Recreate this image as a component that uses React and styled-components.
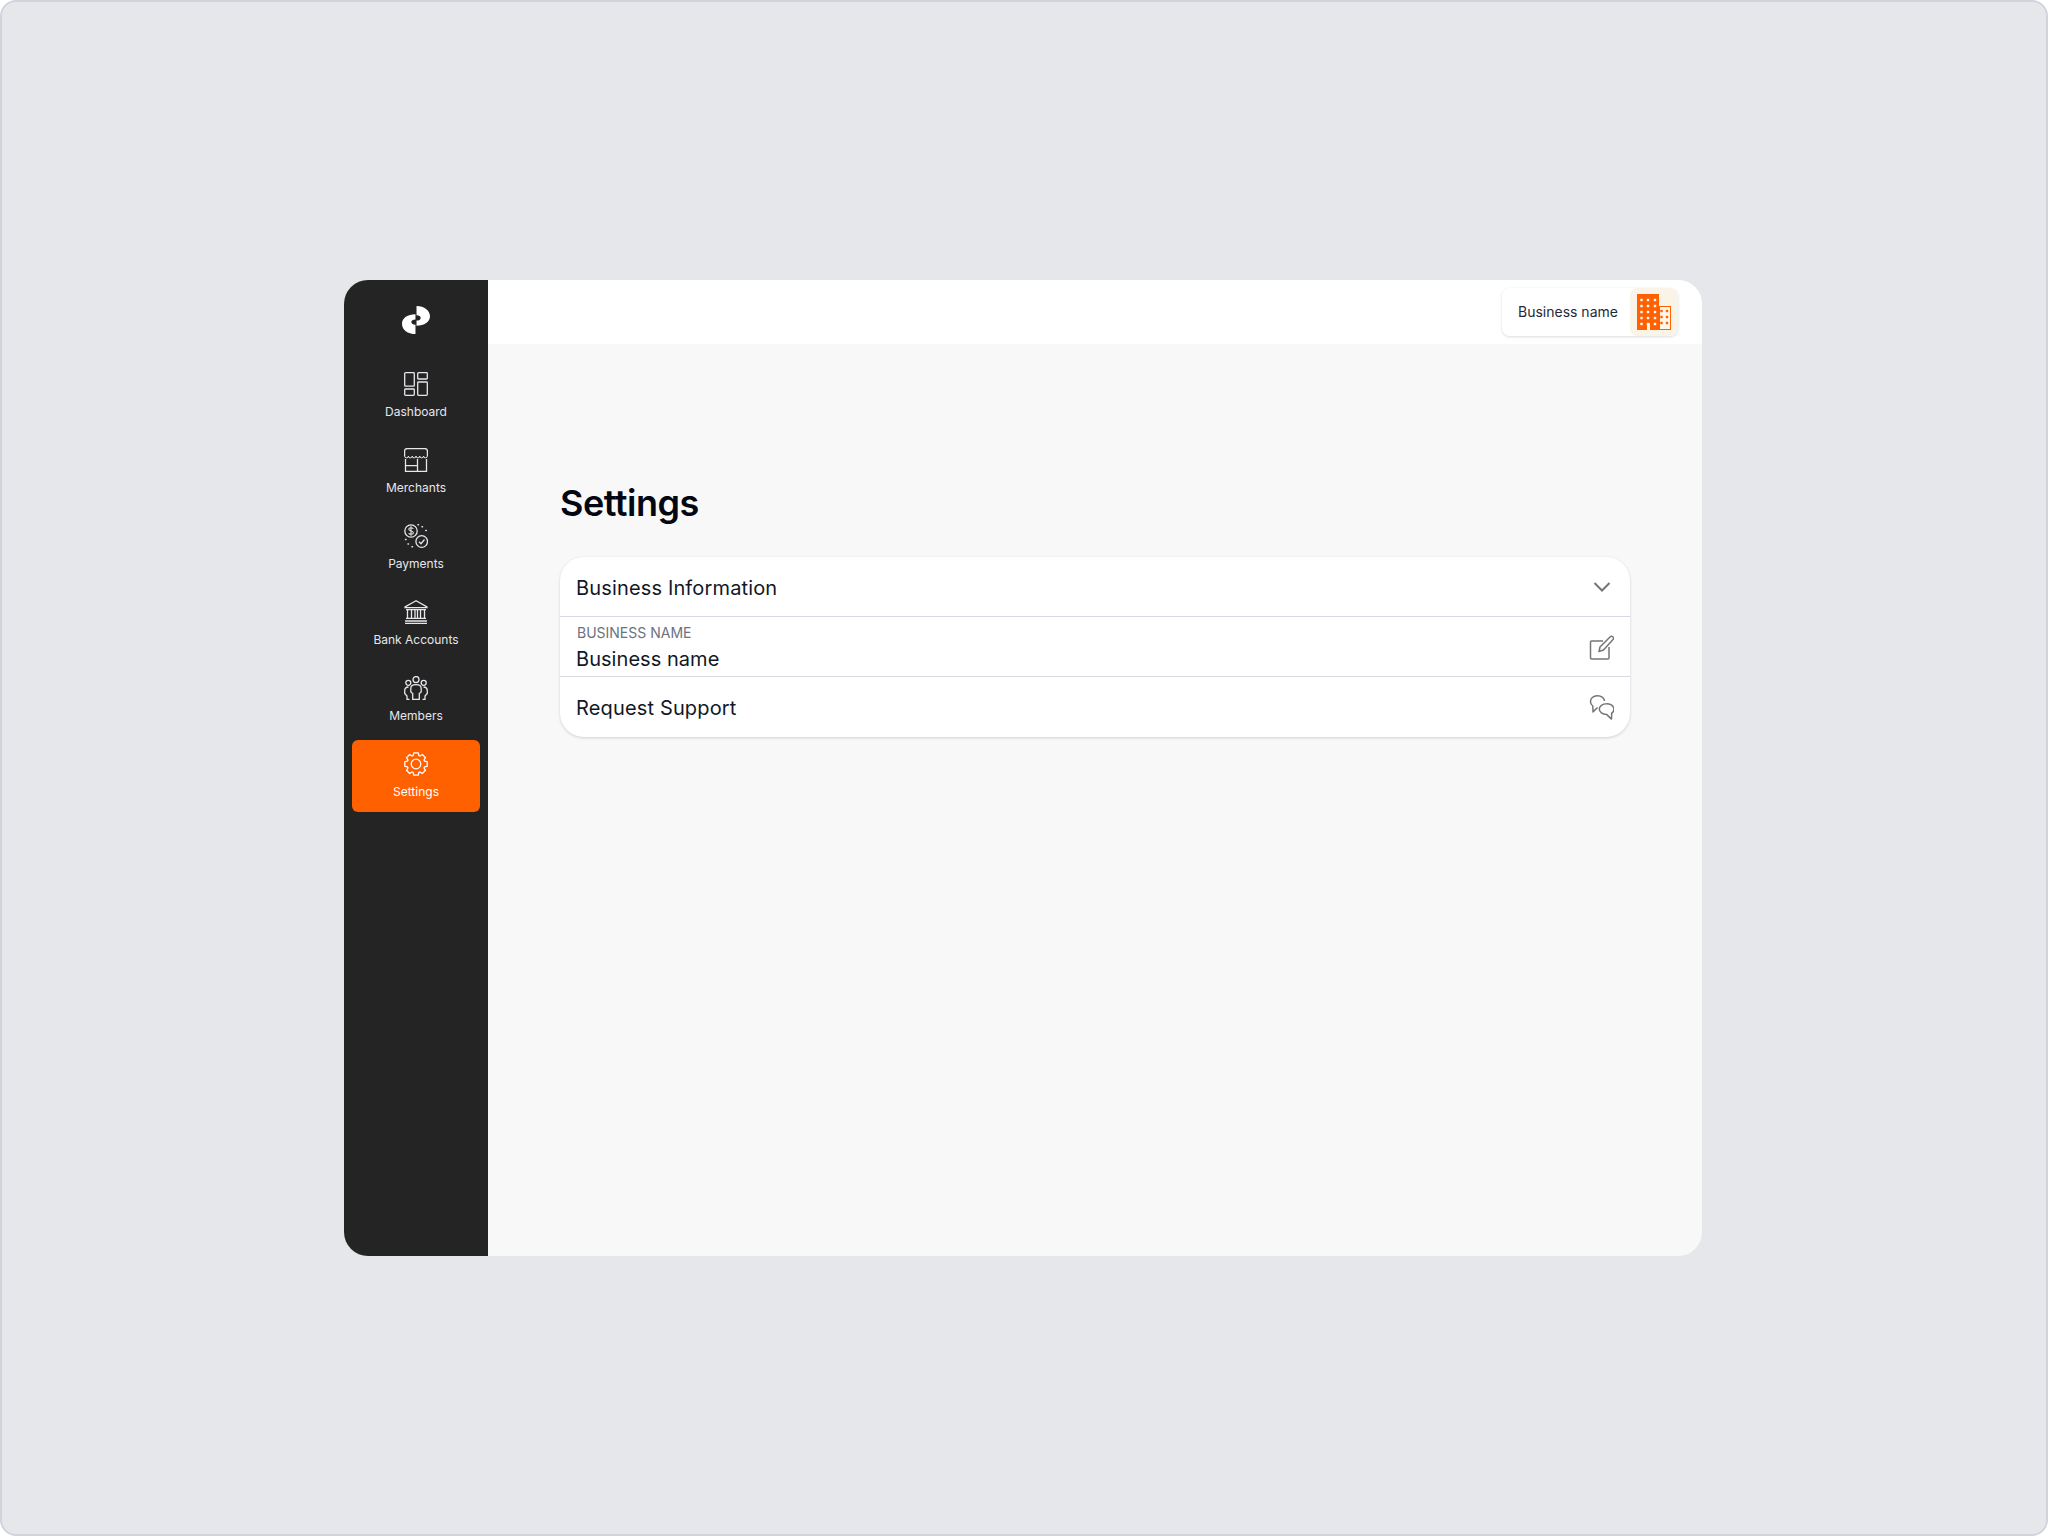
import React from 'react'
import styled, { createGlobalStyle } from 'styled-components'

const GlobalStyle = createGlobalStyle`
  html, body { margin: 0; padding: 0; }
  body { font-family: Inter, "Liberation Sans", sans-serif; }
  * { box-sizing: border-box; }
`

const Page = styled.div`
  width: 2048px;
  height: 1536px;
  display: flex;
  align-items: center;
  justify-content: center;
  padding-right: 2px;
  background: #e5e7eb;
  border: 2px solid #d1d5db;
  border-radius: 16px;
`

const Window = styled.div`
  width: 1358px;
  height: 976px;
  display: flex;
  border-radius: 24px;
  overflow: hidden;
  background: #f8f8f8;
`

const Sidebar = styled.nav`
  width: 144px;
  flex-shrink: 0;
  display: flex;
  flex-direction: column;
  align-items: center;
  background: #242424;
  padding-top: 26px;
`

const LogoMark = styled.svg`
  width: 28px;
  height: 28px;
  margin-bottom: 26px;
  display: block;
`

const NavList = styled.div`
  display: flex;
  flex-direction: column;
  gap: 4px;
`

const NavItem = styled.a`
  width: 128px;
  height: 72px;
  display: flex;
  flex-direction: column;
  align-items: center;
  padding-top: 12px;
  gap: 8px;
  border-radius: 6px;
  font-size: 12px;
  line-height: 16px;
  color: ${p => (p.$active ? '#ffffff' : '#e5e7eb')};
  background: ${p => (p.$active ? '#ff6000' : 'transparent')};
  svg { display: block; }
`

const Main = styled.div`
  flex: 1;
  display: flex;
  flex-direction: column;
`

const TopBar = styled.header`
  height: 64px;
  flex-shrink: 0;
  display: flex;
  align-items: center;
  justify-content: flex-end;
  padding: 0 24px;
  background: #ffffff;
`

const AccountPill = styled.div`
  width: 176px;
  height: 48px;
  display: flex;
  align-items: center;
  justify-content: space-between;
  padding-left: 16px;
  border-radius: 8px;
  background: #ffffff;
  box-shadow: 0 1px 3px rgba(0, 0, 0, 0.14);
  font-size: 14px;
  line-height: 16px;
  color: #1f2937;
  overflow: hidden;
`

const AccountIcon = styled.div`
  width: 48px;
  height: 48px;
  display: flex;
  align-items: center;
  justify-content: center;
  border-radius: 8px;
  background: #f9f3e8;
`

const Content = styled.main`
  flex: 1;
  padding: 137px 72px 0;
`

const Title = styled.h1`
  margin: 0 0 32px;
  font-size: 36px;
  line-height: 44px;
  font-weight: 600;
  letter-spacing: -0.5px;
  color: #030712;
`

const Card = styled.section`
  border-radius: 24px;
  background: #ffffff;
  box-shadow: 0 1px 3px rgba(0, 0, 0, 0.16);
  overflow: hidden;
`

const Row = styled.div`
  height: 60px;
  display: flex;
  align-items: center;
  justify-content: space-between;
  padding: 2px 16px 0;
  border-bottom: ${p => (p.$last ? 'none' : '1px solid #d9d8e2')};
  color: #111827;
  font-size: 20px;
  letter-spacing: 0.15px;
  svg { display: block; flex-shrink: 0; color: #757575; }
`

const FieldLabel = styled.div`
  padding-left: 1px;
  font-size: 14px;
  line-height: 18px;
  letter-spacing: 0;
  color: #6b7280;
`

const FieldValue = styled.div`
  margin-top: 4px;
  font-size: 20px;
  line-height: 26px;
  letter-spacing: 0.05px;
`

function BuildingIcon() {
  return (
    <svg width="34" height="36" viewBox="0 0 34 36">
      <path d="M0 0h22v36H13v-7h-3v7H0z" fill="#ff6000" />
      <rect x="22.5" y="12.5" width="11" height="23" fill="#fff6ea" stroke="#ff6000" />
      {[6, 12, 18, 24, 30].map(y => [4.5, 11, 18].map(x => (
        <rect key={`m${y}${x}`} x={x - 1.2} y={y - 1.2} width="2.4" height="2.4" fill="#fff" />
      )))}
      {[17, 23, 29].map(y => [24.5, 30].map(x => (
        <rect key={`s${y}${x}`} x={x - 1.2} y={y - 1.2} width="2.4" height="2.4" fill="#ff6000" />
      )))}
    </svg>
  )
}

const iconProps = {
  width: 24,
  height: 24,
  viewBox: '0 0 24 24',
  fill: 'none',
  stroke: 'currentColor',
  strokeWidth: 1.3,
}

const DashboardIcon = () => (
  <svg {...iconProps}>
    <rect x=".7" y=".7" width="9.6" height="13.5" rx=".8" />
    <rect x="13.7" y=".7" width="9.6" height="6.3" rx=".8" />
    <rect x=".7" y="17" width="9.6" height="6.3" rx=".8" />
    <rect x="13.7" y="10" width="9.6" height="13.3" rx=".8" />
  </svg>
)

const MerchantsIcon = () => (
  <svg {...iconProps}>
    <path d="M.6 8V3.100A2.500 2.500 0 0 1 3.100.6h17.800a2.500 2.500 0 0 1 2.500 2.500V8" />
    <path d="M23.400 8a1.900 1.900 0 0 1-3.800 0 1.900 1.900 0 0 1-3.800 0 1.900 1.900 0 0 1-3.800 0 1.900 1.900 0 0 1-3.800 0 1.900 1.900 0 0 1-3.800 0 1.900 1.900 0 0 1-3.800 0" strokeWidth="1" />
    <path d="M1.500 11v12.400h21V11M1.500 17.700h12M13.500 11v12.400" />
  </svg>
)

const PaymentsIcon = () => (
  <svg {...iconProps}>
    <circle cx="7" cy="7" r="6.200" />
    <path d="M9.400 4.900C8.800 3.300 4.800 3.200 4.800 5.300c0 2.300 4.600 1.100 4.600 3.500 0 2-4.200 1.800-4.800.3M7 2.200v9.600" strokeWidth="1.100" />
    <circle cx="17.700" cy="17.500" r="5.800" />
    <path d="M15 17.700l2 2 3.500-4.200" />
    <path d="M14 .8h.5M18 2.800h.5M21.800 6.500h.5M1.500 15.500h.5M4 20h.5M8 22.800h.5" strokeWidth="1.500" strokeLinecap="round" />
  </svg>
)

const BankIcon = () => (
  <svg {...iconProps}>
    <path d="M12 .8L1 7v.7h22V7z" />
    <path d="M2 9.700h20M3.500 10v8M7.500 10v8M11 10v8M13.500 10v8M16.500 10v8M20.500 10v8M2 18.300h20M1 21h22M1 23.300h22" />
  </svg>
)

const MembersIcon = () => (
  <svg {...iconProps}>
    <circle cx="12" cy="3.600" r="3" />
    <circle cx="4.300" cy="6.800" r="2.500" />
    <circle cx="19.700" cy="6.800" r="2.500" />
    <path d="M8.700 23.300V17.500L6.800 16V12.500C6.800 10 9 8.700 12 8.700s5.200 1.300 5.200 3.800V16l-1.900 1.500v5.800z" />
    <path d="M4.500 11C2 11 .7 12.500.7 15v2.500L3 20v3.300h2.500M19.500 11c2.500 0 3.800 1.500 3.800 4v2.500L21 20v3.300h-2.500" />
  </svg>
)

// 8 tooth gear outline, worked out once from polar points
const gearPoints = Array.from({ length: 8 }).flatMap((_, i) => {
  const a = (i * Math.PI) / 4 - Math.PI / 2
  const spots = [[-0.33, 8.9], [-0.2, 11.4], [0.2, 11.4], [0.33, 8.9]]
  return spots.map(([d, r]) => `${(12 + r * Math.cos(a + d)).toFixed(2)},${(12 + r * Math.sin(a + d)).toFixed(2)}`)
}).join(' ')

const GearIcon = () => (
  <svg {...iconProps}>
    <polygon points={gearPoints} strokeLinejoin="round" />
    <circle cx="12" cy="12" r="4.800" />
  </svg>
)

const ChevronIcon = () => (
  <svg width="24" height="24" viewBox="0 1 24 24" fill="none" stroke="currentColor" strokeWidth="2">
    <path d="M4.500 8l7.500 7.500L19.500 8" />
  </svg>
)

const EditIcon = () => (
  <svg width="26" height="26" viewBox="0 0 26 26" fill="none" stroke="currentColor" strokeWidth="1.500">
    <path d="M15 6H3.500a1 1 0 0 0-1 1v16a1 1 0 0 0 1 1h16.500a1 1 0 0 0 1-1V12" />
    <path d="M11 16.500l1-4.500L22 2a1.900 1.900 0 0 1 3 2.500L15.500 15z" strokeLinejoin="round" />
  </svg>
)

const ChatIcon = () => (
  <svg width="26" height="26" viewBox="0 1 26 26" fill="none" stroke="currentColor" strokeWidth="1.500" strokeLinejoin="round">
    <path d="M16.500 7A7 5.500 0 0 0 2.500 7.500c0 2 .9 3.500 2.300 4.500L5 18l4.500-4.600" />
    <path d="M18.500 9.800a7.200 5.400 0 0 1 5.200 9.300l-.2 6-5-4.700a7.200 5.300 0 0 1 0-10.600z" />
  </svg>
)

const navItems = [
  { label: 'Dashboard', Icon: DashboardIcon },
  { label: 'Merchants', Icon: MerchantsIcon },
  { label: 'Payments', Icon: PaymentsIcon },
  { label: 'Bank Accounts', Icon: BankIcon },
  { label: 'Members', Icon: MembersIcon },
  { label: 'Settings', Icon: GearIcon, active: true },
]

export default function App() {
  return (
    <>
      <GlobalStyle />
      <Page>
        <Window>
          <Sidebar>
            <LogoMark viewBox="0 0 27 27" fill="#ffffff">
              <path d="M14 0C21.500 0 27 4.200 27 10 27 15.500 21.500 19 14 19V14C16.500 14 18 13 18 11.500 18 10 16.500 9 14 9z" />
              <path d="M13 27C5.500 27 0 22.800 0 17 0 11.500 5.500 8 13 8V13C10.500 13 9 14 9 15.500 9 17 10.500 18 13 18z" />
            </LogoMark>
            <NavList>
              {navItems.map(({ label, Icon, active }) => (
                <NavItem key={label} $active={active}>
                  <Icon />
                  {label}
                </NavItem>
              ))}
            </NavList>
          </Sidebar>
          <Main>
            <TopBar>
              <AccountPill>
                Business name
                <AccountIcon><BuildingIcon /></AccountIcon>
              </AccountPill>
            </TopBar>
            <Content>
              <Title>Settings</Title>
              <Card>
                <Row>
                  Business Information
                  <ChevronIcon />
                </Row>
                <Row>
                  <div>
                    <FieldLabel>BUSINESS NAME</FieldLabel>
                    <FieldValue>Business name</FieldValue>
                  </div>
                  <EditIcon />
                </Row>
                <Row $last>
                  Request Support
                  <ChatIcon />
                </Row>
              </Card>
            </Content>
          </Main>
        </Window>
      </Page>
    </>
  )
}
